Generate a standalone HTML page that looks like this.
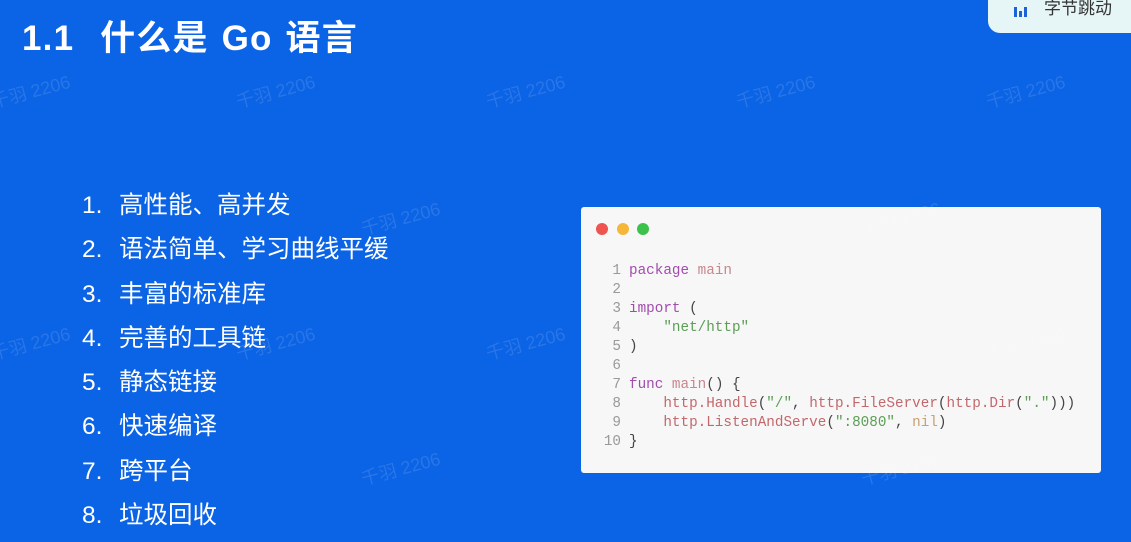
<!DOCTYPE html>
<html><head><meta charset="utf-8"><style>
body{margin:0;width:1131px;height:534px;overflow:hidden;background:#0b63e5;position:relative;font-family:"Liberation Sans","Noto Sans CJK SC",sans-serif;color:#fff}
.t{position:absolute;left:22px;top:10px;font-size:35px;font-weight:bold;letter-spacing:1.2px;word-spacing:2px}
.logo{position:absolute;left:988px;top:-12px;width:160px;height:45px;background:#e6f5f5;border-radius:12px}
.logo span{position:absolute;left:56px;top:6px;font-size:17px;color:#333}
.bars{position:absolute;left:26px;top:11px}
.bars i{display:inline-block;width:3px;margin-right:2px;background:#1d63d8;vertical-align:bottom}
ol{position:absolute;left:82px;top:188px;margin:0;padding:0;list-style:none;font-size:24.5px}
ol li{height:44.3px;line-height:36px}
ol b{display:inline-block;width:37px;font-weight:normal}
.card{position:absolute;left:581px;top:207px;width:520px;height:266px;background:#f7f7f7;border-radius:3px}
.dot{position:absolute;top:16px;width:12px;height:12px;border-radius:50%}
pre{position:absolute;left:0;top:55px;margin:0;font-family:"Liberation Mono",monospace;font-size:14.3px;line-height:19px;color:#444}
.n{color:#999;display:inline-block;width:40px;text-align:right;margin-right:8px}
.k{color:#a24cae}.m{color:#c8878c}.s{color:#5c9e56}.f{color:#c2686c}.nl{color:#c9a070}
.w{position:absolute;font-size:18px;color:rgba(255,255,255,0.12);transform:rotate(-15deg);white-space:nowrap}
</style></head><body>
<div class="t">1.1&nbsp; 什么是 Go 语言</div>
<div class="logo"><div class="bars"><i style="height:10px"></i><i style="height:6px"></i><i style="height:10px"></i></div><span>字节跳动</span></div>
<ol>
<li><b>1.</b>高性能、高并发</li>
<li><b>2.</b>语法简单、学习曲线平缓</li>
<li><b>3.</b>丰富的标准库</li>
<li><b>4.</b>完善的工具链</li>
<li><b>5.</b>静态链接</li>
<li><b>6.</b>快速编译</li>
<li><b>7.</b>跨平台</li>
<li><b>8.</b>垃圾回收</li>
</ol>
<div class="card">
<div class="dot" style="left:15px;background:#ee5550"></div>
<div class="dot" style="left:36px;background:#f4b73a"></div>
<div class="dot" style="left:56px;background:#3cc24a"></div>
<pre><span class="n">1</span><span class="k">package</span> <span class="m">main</span>
<span class="n">2</span>
<span class="n">3</span><span class="k">import</span> (
<span class="n">4</span>    <span class="s">"net/http"</span>
<span class="n">5</span>)
<span class="n">6</span>
<span class="n">7</span><span class="k">func</span> <span class="m">main</span>() {
<span class="n">8</span>    <span class="f">http.Handle</span>(<span class="s">"/"</span>, <span class="f">http.FileServer</span>(<span class="f">http.Dir</span>(<span class="s">"."</span>)))
<span class="n">9</span>    <span class="f">http.ListenAndServe</span>(<span class="s">":8080"</span>, <span class="nl">nil</span>)
<span class="n">10</span>}</pre>
</div>
<div class="w" style="left:-10px;top:78px">千羽 2206</div>
<div class="w" style="left:235px;top:78px">千羽 2206</div>
<div class="w" style="left:485px;top:78px">千羽 2206</div>
<div class="w" style="left:735px;top:78px">千羽 2206</div>
<div class="w" style="left:985px;top:78px">千羽 2206</div>
<div class="w" style="left:360px;top:205px">千羽 2206</div>
<div class="w" style="left:860px;top:205px">千羽 2206</div>
<div class="w" style="left:-10px;top:330px">千羽 2206</div>
<div class="w" style="left:235px;top:330px">千羽 2206</div>
<div class="w" style="left:485px;top:330px">千羽 2206</div>
<div class="w" style="left:985px;top:330px">千羽 2206</div>
<div class="w" style="left:360px;top:455px">千羽 2206</div>
<div class="w" style="left:860px;top:455px">千羽 2206</div>
</body></html>
